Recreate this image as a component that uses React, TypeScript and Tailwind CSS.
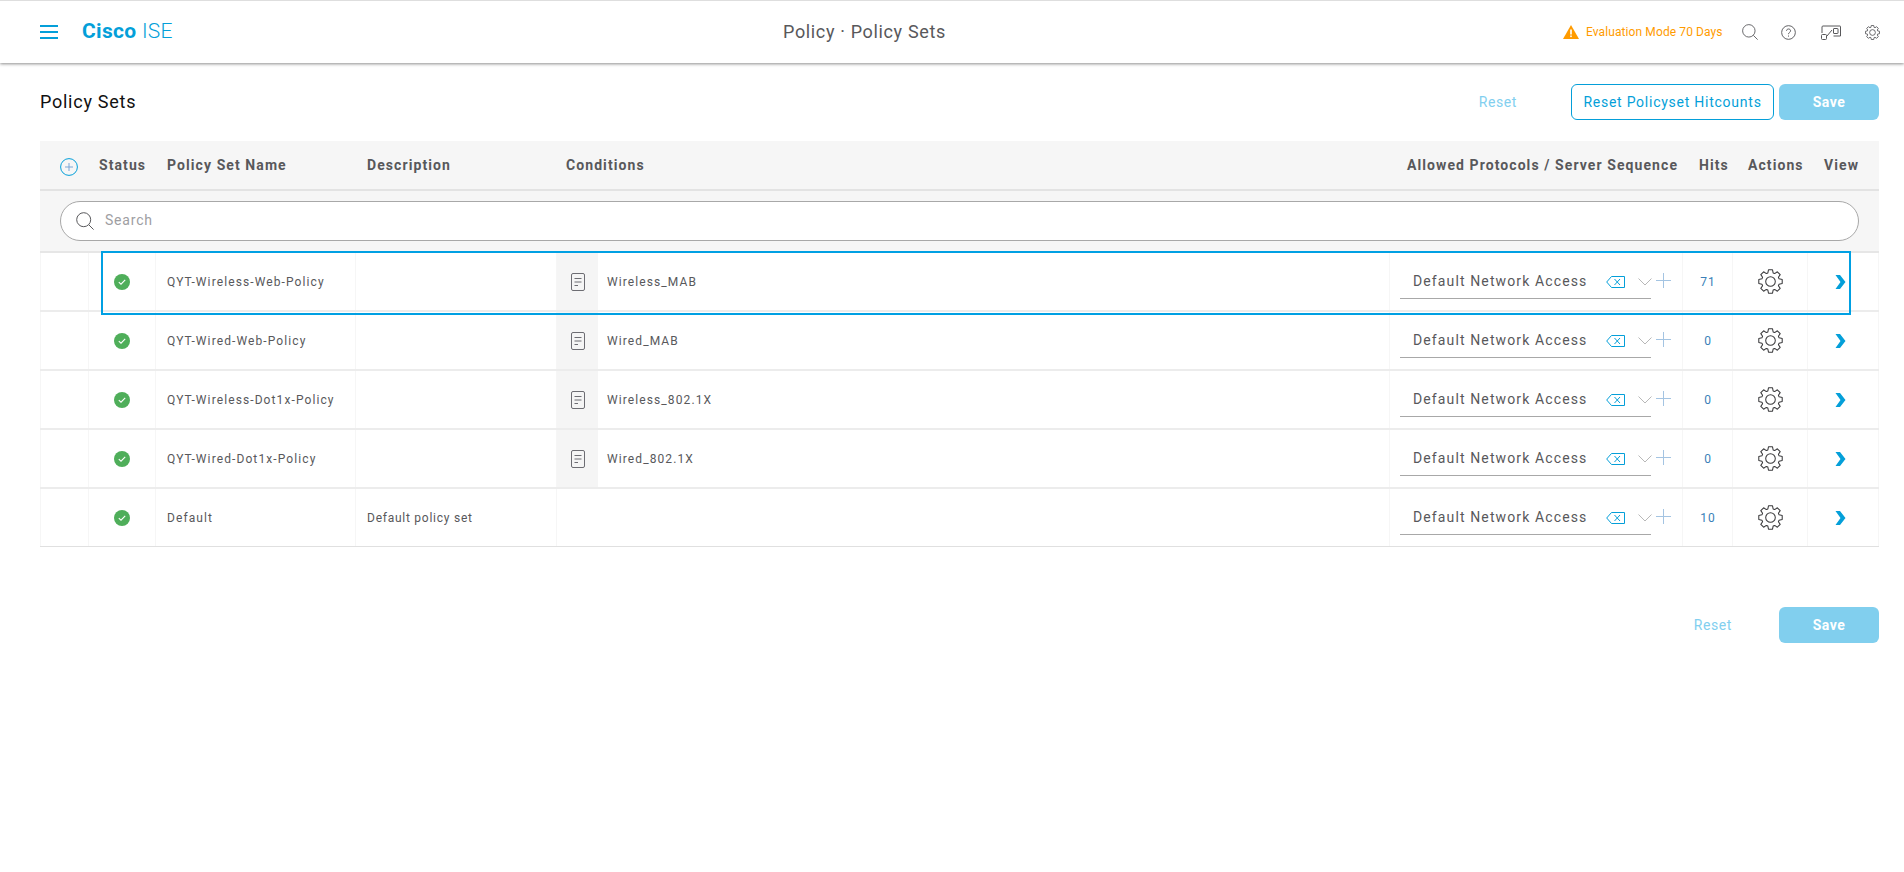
import React from "react";

const rows = [
  { name: "QYT-Wireless-Web-Policy", desc: "", cond: "Wireless_MAB", hits: "71" },
  { name: "QYT-Wired-Web-Policy", desc: "", cond: "Wired_MAB", hits: "0" },
  { name: "QYT-Wireless-Dot1x-Policy", desc: "", cond: "Wireless_802.1X", hits: "0" },
  { name: "QYT-Wired-Dot1x-Policy", desc: "", cond: "Wired_802.1X", hits: "0" },
  { name: "Default", desc: "Default policy set", cond: "", hits: "10" },
];

function Gear({ size = 24, color = "#39393b", sw = 1 }: { size?: number; color?: string; sw?: number }) {
  const teeth = 8;
  const cx = 12, cy = 12, R = 11.4, r = 8.6;
  let d = "";
  for (let i = 0; i < teeth; i++) {
    const a = (i / teeth) * Math.PI * 2 - Math.PI / 2;
    const pts = [
      [a - 0.3, r], [a - 0.17, R], [a + 0.17, R], [a + 0.3, r],
    ];
    pts.forEach(([t, q], j) => {
      const x = (cx + q * Math.cos(t)).toFixed(2), y = (cy + q * Math.sin(t)).toFixed(2);
      d += (i === 0 && j === 0 ? "M" : "L") + x + " " + y + " ";
    });
  }
  d += "Z";
  return (
    <svg width={size} height={size} viewBox="0 0 24 24" fill="none" stroke={color} strokeWidth={sw} strokeLinejoin="round">
      <path d={d} />
      <circle cx="12" cy="12" r="4.6" />
    </svg>
  );
}

function Search({ size, color }: { size: number; color: string }) {
  return (
    <svg width={size} height={size} viewBox="0 0 18 18" fill="none" stroke={color} strokeWidth="1">
      <circle cx="7.7" cy="7.7" r="7" />
      <path d="M12.8 12.8 L17.6 17.6" />
    </svg>
  );
}

function Row({ r, last }: { r: (typeof rows)[number]; last: boolean }) {
  const cell = "h-full border-r border-[#f6f6f6] flex items-center shrink-0";
  const txt = "text-[12px] tracking-[1.1px] text-[#58585b] whitespace-nowrap mt-[1px]";
  return (
    <div className={`flex items-stretch ${last ? "h-[58px] border-b border-[#e0e0e0]" : "h-[59px] border-b-2 border-[#ececec]"}`}>
      <div className={`${cell} w-[49px] border-l border-l-[#f6f6f6]`} />
      <div className={`${cell} w-[67px] pl-[25px]`}>
        <svg width="16" height="16" viewBox="0 0 16 16">
          <circle cx="8" cy="8" r="8" fill="#4fae5a" />
          <path d="M4.8 8.2 L7 10.2 L11.2 5.9" fill="none" stroke="#fff" strokeWidth="1.1" />
        </svg>
      </div>
      <div className={`${cell} w-[200px] pl-[11px]`}><span className={txt}>{r.name}</span></div>
      <div className={`${cell} w-[201px] pl-[11px]`}><span className="text-[12px] tracking-[0.75px] text-[#58585b] whitespace-nowrap mt-[1px]">{r.desc}</span></div>
      <div className={`${cell} w-[833px]`}>
        {r.cond && (
          <>
            <div className="w-[41px] h-full bg-[#f5f5f5] flex items-center justify-center shrink-0">
              <svg width="16" height="20" viewBox="0 0 16 20" fill="none" stroke="#6d6d73" strokeWidth="1">
                <rect x="1.5" y="1.5" width="13" height="17" rx="1.5" />
                <path d="M4.5 6.5H11.5M4.5 10H11.5M4.5 13.5H8" />
              </svg>
            </div>
            <span className={`ml-[9px] ${txt}`}>{r.cond}</span>
          </>
        )}
      </div>
      <div className={`${cell} w-[293px] pl-[10px]`}>
        <div className="w-[251px] h-[33px] border-b border-[#a8a8a8] flex items-center mt-[2px] pb-[1px] shrink-0">
          <span className="ml-[13px] text-[14px] tracking-[1.12px] text-[#58585b] whitespace-nowrap">Default Network Access</span>
          <svg className="ml-[19px] shrink-0" width="19" height="12" viewBox="0 0 19 12" fill="none" stroke="#049fd9" strokeWidth="1">
            <path d="M5.5 0.5 H18.5 V11.5 H5.5 L0.7 6 Z" />
            <path d="M8.5 3 L14 9 M14 3 L8.5 9" />
          </svg>
          <svg className="ml-[13px] shrink-0" width="14" height="8" viewBox="0 0 14 8" fill="none" stroke="#b8b8b8" strokeWidth="1">
            <path d="M0.5 0.5 L7 7 L13.5 0.5" />
          </svg>
        </div>
        <svg className="ml-[5px] -mt-[2px] shrink-0" width="15" height="15" viewBox="0 0 15 15" fill="none" stroke="#a4c4e2" strokeWidth="1">
          <path d="M7.5 0V15M0 7.5H15" />
        </svg>
      </div>
      <div className={`${cell} w-[50px] justify-center`}><span className="text-[12px] tracking-[0.9px] text-[#3a7fb8] ml-[1px] mt-[1px]">{r.hits}</span></div>
      <div className={`${cell} w-[75px] pl-[25px]`}><Gear size={25} /></div>
      <div className="h-full flex items-center pl-[27px] grow border-r border-[#f6f6f6]">
        <svg width="11" height="14" viewBox="0 0 11 14" fill="#049fd9"><path d="M0.5 0 H5 L10.5 7 L5 14 H0.5 L5.5 7 Z" /></svg>
      </div>
    </div>
  );
}

export default function App() {
  const th = "text-[14px] font-bold tracking-[1.08px] text-[#58585b] whitespace-nowrap shrink-0";
  return (
    <div className="w-[1904px] h-[872px] bg-white overflow-hidden font-['Roboto','Inter',sans-serif]">
      <header className="h-[63px] border-t-[1px] border-[#dedede] bg-white shadow-[0_1px_3px_rgba(0,0,0,0.45)] relative flex items-center pb-[1px]">
        <div className="w-[783px] flex items-center pl-[40px] shrink-0">
          <div className="w-[18px] flex flex-col gap-[4px]">
            <div className="h-[2px] bg-[#049fd9]" /><div className="h-[2px] bg-[#049fd9]" /><div className="h-[2px] bg-[#049fd9]" />
          </div>
          <span className="ml-[24px] text-[21px] leading-none text-[#049fd9] tracking-[0.3px]"><b className="font-bold">Cisco</b> <span className="font-light">ISE</span></span>
        </div>
        <span className="text-[18px] text-[#58585b] tracking-[0.65px] w-[780px] shrink-0">Policy · Policy Sets</span>
        <div className="flex items-center h-full absolute left-[1563px] top-0">
          <svg width="16" height="14" viewBox="0 0 16 14"><path d="M8 0 L16 14 H0 Z" fill="#ff9b00" /><rect x="7.2" y="4.5" width="1.6" height="5" fill="#fff" /><rect x="7.2" y="10.5" width="1.6" height="1.6" fill="#fff" /></svg>
          <span className="ml-[7px] text-[12px] text-[#ff9b00] whitespace-nowrap tracking-[0.1px]">Evaluation Mode 70 Days</span>
          <span className="ml-[19px]"><Search size={16} color="#58585b" /></span>
          <svg className="ml-[23px]" width="15" height="15" viewBox="0 0 16 16" fill="none" stroke="#58585b" strokeWidth="1"><circle cx="8" cy="8" r="7.3" /><path d="M5.9 6.2 C5.9 3.6 10.2 3.6 10.2 6.2 C10.2 7.9 8 7.8 8 9.8" /><path d="M8 11.2V12.4" /></svg>
          <svg className="ml-[25px]" width="20" height="15" viewBox="0 0 20 15" fill="none" stroke="#58585b" strokeWidth="1"><path d="M1 8V2a1 1 0 0 1 1-1h17a.5.5 0 0 1 .5.5V11h-7" /><rect x="0.5" y="9.5" width="5" height="5" rx="1" /><rect x="12.5" y="3.5" width="4.5" height="5" rx="0.5" /><path d="M6 11 L11 5" /></svg>
          <span className="ml-[24px]"><Gear size={15} color="#58585b" sw={1.4} /></span>
        </div>
      </header>

      <main className="pl-[40px] pr-[25px]">
        <div className="h-[78px] flex items-center">
          <h1 className="text-[18px] font-normal text-[#111] tracking-[0.74px] -mt-[2px]">Policy Sets</h1>
          <div className="ml-auto flex items-center">
            <span className="text-[14px] text-[#82cfef] tracking-[0.6px] mr-[54px]">Reset</span>
            <button className="h-[36px] w-[203px] rounded-[6px] border border-[#049fd9] text-[14px] tracking-[0.75px] text-[#049fd9]">Reset Policyset Hitcounts</button>
            <button className="ml-[5px] h-[36px] w-[100px] rounded-[6px] bg-[#81cfee] text-[14px] font-bold text-white tracking-[0.5px]">Save</button>
          </div>
        </div>

        <div className="relative">
          <div className="h-[50px] bg-[#f6f6f6] border-b-2 border-[#e3e3e3] flex items-center">
            <div className="w-[59px] pl-[20px] shrink-0 pt-[3px]">
              <svg width="18" height="18" viewBox="0 0 18 18" fill="none"><circle cx="9" cy="9" r="8.4" stroke="#049fd9" strokeWidth="1" /><path d="M9 5V13M5 9H13" stroke="#7aa6d6" strokeWidth="1" /></svg>
            </div>
            <div className={`${th} w-[68px]`}>Status</div>
            <div className={`${th} w-[200px]`}>Policy Set Name</div>
            <div className={`${th} w-[199px]`}>Description</div>
            <div className={`${th} w-[841px]`}>Conditions</div>
            <div className={`${th} w-[292px]`}>Allowed Protocols / Server Sequence</div>
            <div className={`${th} w-[49px]`}>Hits</div>
            <div className={`${th} w-[76px]`}>Actions</div>
            <div className={th}>View</div>
          </div>
          <div className="h-[62px] bg-[#f6f6f6] border-b-2 border-[#e6e6e6] px-[20px] pt-[10px]">
            <div className="h-[40px] rounded-full border border-[#a8a8a8] bg-white flex items-center pl-[15px]">
              <Search size={18} color="#58585b" />
              <span className="ml-[11px] -mt-[2px] text-[14px] text-[#9e9ea2] tracking-[0.8px]">Search</span>
            </div>
          </div>
          {rows.map((r, i) => <Row key={r.name} r={r} last={i === rows.length - 1} />)}
          <div className="absolute left-[61px] top-[110px] w-[1750px] h-[64px] border-2 border-[#00a0e3] pointer-events-none" />
        </div>

        <div className="flex items-center justify-end mt-[60px]">
          <span className="text-[14px] text-[#82cfef] tracking-[0.6px] mr-[47px]">Reset</span>
          <button className="h-[36px] w-[100px] rounded-[6px] bg-[#81cfee] text-[14px] font-bold text-white tracking-[0.5px]">Save</button>
        </div>
      </main>
    </div>
  );
}
